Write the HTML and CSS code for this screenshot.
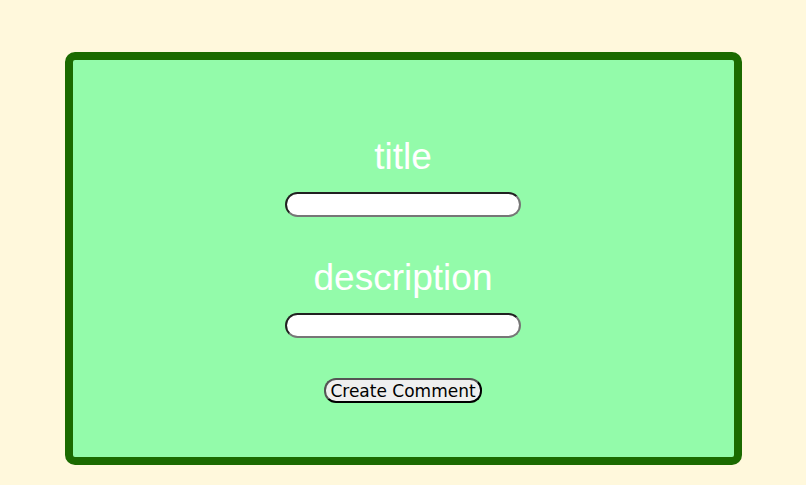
FILE: index.html
```html
<!DOCTYPE html>
<html lang="en">
<head>
    <meta charset="UTF-8">
    <meta name="viewport" content="width=device-width, initial-scale=1.0">
    <title>Create Comment</title>
    <link rel="stylesheet" href="styles.css">
</head>
<body>
    <div class="container">
        <form class="comment-form">
            <div class="field">
                <label for="title">title</label>
                <input type="text" id="title" name="title">
            </div>
            <div class="field">
                <label for="description">description</label>
                <input type="text" id="description" name="description">
            </div>
            <button type="submit" class="create-btn">Create Comment</button>
        </form>
    </div>
</body>
</html>
```

FILE: styles.css
```css
body {
    margin: 0;
    background-color: #fff8dc;
    font-family: "DejaVu Sans", sans-serif;
}
.container {
    width: 661px;
    height: 397px;
    margin: 52px auto 0;
    border: 8px solid #1b6a00;
    border-radius: 10px;
    background-color: #93fbaa;
    box-sizing: content-box;
}
.comment-form {
    display: flex;
    flex-direction: column;
    align-items: center;
    padding-top: 76px;
}
.field {
    display: flex;
    flex-direction: column;
    align-items: center;
    margin-bottom: 40px;
}
.field label {
    font-family: "Liberation Sans", Arial, sans-serif;
    font-size: 37px;
    line-height: 41px;
    color: white;
    margin-bottom: 15px;
}
.field input {
    width: 236px;
    height: 25px;
    box-sizing: border-box;
    border-radius: 13px;
    font-size: 16px;
    background: white;
}
.create-btn {
    font-family: "DejaVu Sans", sans-serif;
    font-size: 17px;
    width: 158px;
    height: 25px;
    border-radius: 12px;
    padding: 0;
}
```
